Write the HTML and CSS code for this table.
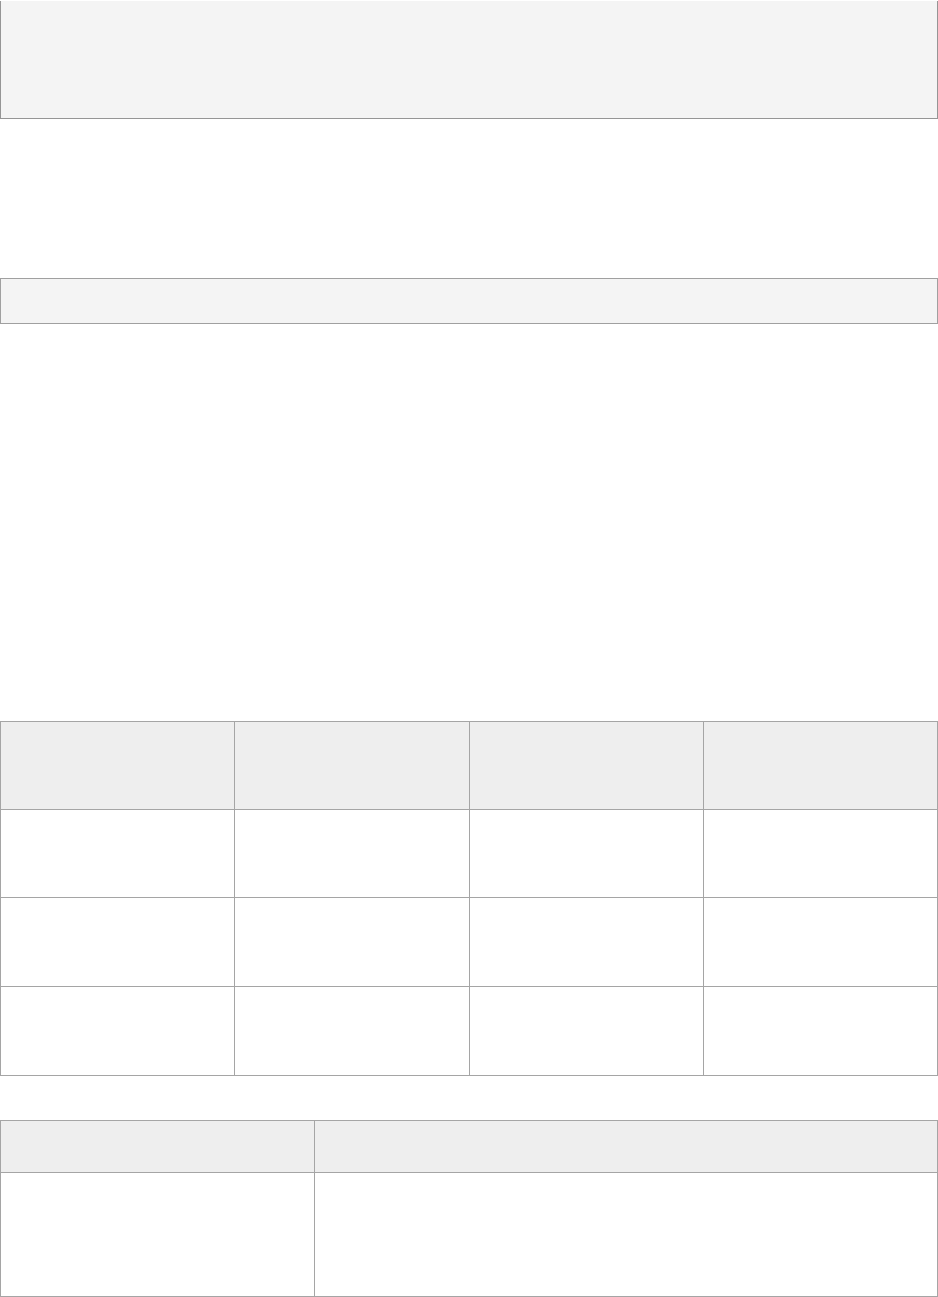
FILE: index.html
```html
<!DOCTYPE html>
<html lang="en">
<head>
<meta charset="utf-8">
<title>Page</title>
<link rel="stylesheet" href="styles.css">
</head>
<body>
<main class="page">
  <div class="panel panel-top"></div>
  <div class="panel panel-bar"></div>

  <table class="grid grid-four">
    <thead>
      <tr class="head-row">
        <th></th><th></th><th></th><th></th>
      </tr>
    </thead>
    <tbody>
      <tr class="body-row body-row-first"><td></td><td></td><td></td><td></td></tr>
      <tr class="body-row"><td></td><td></td><td></td><td></td></tr>
      <tr class="body-row"><td></td><td></td><td></td><td></td></tr>
    </tbody>
  </table>

  <table class="grid grid-two">
    <thead>
      <tr class="head-row-short">
        <th class="col-narrow"></th><th></th>
      </tr>
    </thead>
    <tbody>
      <tr class="body-row-tall"><td class="col-narrow"></td><td></td></tr>
    </tbody>
  </table>
</main>
</body>
</html>
```

FILE: styles.css
```css
html, body {
  margin: 0;
  padding: 0;
  background: #ffffff;
  font-family: "Liberation Sans", Arial, sans-serif;
}

.page {
  display: flex;
  flex-direction: column;
  width: 938px;
}

.panel {
  box-sizing: border-box;
  background: #f4f4f4;
  border: 1px solid #959595;
}

.panel-top {
  margin-top: 1px;
  height: 118px;
  border-top: 0;
}

.panel-bar {
  margin-top: 159px;
  height: 46px;
  border-color: #a0a0a0;
}

.grid {
  width: 938px;
  border-collapse: collapse;
  table-layout: fixed;
}

.grid th,
.grid td {
  border: 1px solid #a5a5a5;
  padding: 0;
}

.grid th {
  background: #eeeeee;
}

.grid-four {
  margin-top: 397px;
}

.head-row { height: 88px; }
.body-row { height: 89px; }
.body-row-first { height: 88px; }

.grid-two {
  margin-top: 44px;
}

.col-narrow { width: 313px; }
.head-row-short { height: 52px; }
.body-row-tall { height: 124px; }
```
